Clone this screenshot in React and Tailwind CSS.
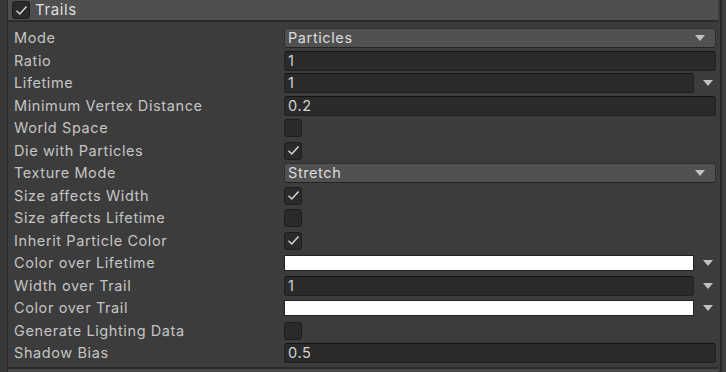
import React from "react";

const Check = ({ on }) => (
  <div className="w-[18px] h-[18px] rounded-[3px] bg-[#2a2a2a] border border-[#1e1e1e] flex items-center justify-center">
    {on && (
      <svg width="13" height="11" viewBox="0 0 13 11">
        <path d="M1.5 5.8 L4.8 9 L11.5 1.5" fill="none" stroke="#d6d6d6" strokeWidth="1.5" />
      </svg>
    )}
  </div>
);

const Arrow = () => (
  <svg width="10" height="6" viewBox="0 0 10 6">
    <path d="M0 0 H10 L5 6 Z" fill="#c2c2c2" />
  </svg>
);

const Dropdown = ({ text }) => (
  <div className="h-[20px] rounded-[3px] bg-[#515151] border border-[#303030] border-b-[#242424] flex items-center justify-between pl-[3px] pr-[10px] text-[#dcdcdc]">
    <span>{text}</span>
    <Arrow />
  </div>
);

const Field = ({ text }) => (
  <div className="h-[20px] rounded-[3px] bg-[#2a2a2a] border border-[#212121] border-t-[#141414] flex items-center pl-[3px] text-[#d2d2d2]">
    {text}
  </div>
);

const Curve = ({ white, text }) => (
  <div className="flex items-center gap-[6px]">
    {white ? (
      <div className="flex-1 h-[16px] bg-white border border-[#232323]" />
    ) : (
      <div className="flex-1">
        <Field text={text} />
      </div>
    )}
    <div className="w-[16px] flex justify-center">
      <Arrow />
    </div>
  </div>
);

const rows = [
  ["Mode", <Dropdown text="Particles" />],
  ["Ratio", <Field text="1" />],
  ["Lifetime", <Curve text="1" />],
  ["Minimum Vertex Distance", <Field text="0.2" />],
  ["World Space", <Check />],
  ["Die with Particles", <Check on />],
  ["Texture Mode", <Dropdown text="Stretch" />],
  ["Size affects Width", <Check on />],
  ["Size affects Lifetime", <Check />],
  ["Inherit Particle Color", <Check on />],
  ["Color over Lifetime", <Curve white />],
  ["Width over Trail", <Curve text="1" />],
  ["Color over Trail", <Curve white />],
  ["Generate Lighting Data", <Check />],
  ["Shadow Bias", <Field text="0.5" />],
];

export default function App() {
  return (
    <div
      className="w-[726px] h-[372px] overflow-hidden bg-[#3a3a3a] flex text-[14.5px] tracking-[0.6px]"
      style={{ fontFamily: "Inter, 'Noto Sans', sans-serif" }}
    >
      <div className="w-[8px] bg-[#383838] border-r border-[#262626] shrink-0" />
      <div className="flex-1 flex flex-col bg-[#3c3c3c]">
        <div className="h-[22px] bg-[#4f4f4f] border-b-2 border-[#2a2a2a] flex items-center pl-[4px] gap-[5px] shrink-0">
          <Check on />
          <span className="text-[#dedede] text-[15px]">Trails</span>
        </div>
        <div className="flex flex-col pt-[5px] pl-[6px] pr-[2px]">
          {rows.map(([label, ctrl], i) => (
            <div key={i} className="h-[22.5px] grid grid-cols-[270px_1fr] items-center">
              <span className="text-[#c4c4c4] whitespace-nowrap">{label}</span>
              <div>{ctrl}</div>
            </div>
          ))}
        </div>
        <div className="mt-auto h-[5px] border-t-2 border-[#2a2a2a] bg-[#4a4a4a] shrink-0" />
      </div>
      <div className="w-[8px] shrink-0 flex">
        <div className="w-[2px] bg-[#3c3c3c]" />
        <div className="w-[2px] bg-[#282828]" />
        <div className="flex-1 bg-[#404040]" />
      </div>
    </div>
  );
}
